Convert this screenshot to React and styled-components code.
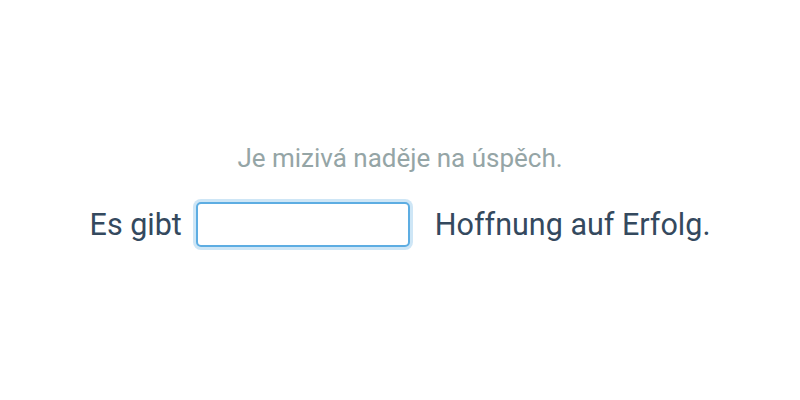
import React from 'react'
import styled, { createGlobalStyle } from "styled-components";

const Global = createGlobalStyle`
body {
  margin: 0;
  background: #fff;
  font-family: Roboto, "Liberation Sans", sans-serif;
}
`;

const Page = styled.div`
height: 400px;
display: flex;
flex-direction: column;
align-items: center;
justify-content: center;
padding-bottom: 10px;
box-sizing: border-box;
`;

const Hint = styled.p`
margin: 0 0 29px;
font-size: 26px;
line-height: 30px;
color: #95a5a6;
`;

const Sentence = styled.div`
display: flex;
align-items: center;
font-size: 30.5px;
color: #34495e;
`;

const Word = styled.span`
margin: ${p => p.side === 'left' ? '0 14px 0 0' : '0 0 0 25px'};
`;

const Blank = styled.input`
width: 214px;
height: 45px;
box-sizing: border-box;
border: 2px solid #5dade2;
border-radius: 5px;
box-shadow: 0 0 0 3px rgba(93, 173, 226, 0.3);
outline: none;
font-size: 24px;
font-family: inherit;
padding: 0 10px;
`;

export default function App() {
    return (
        <>
        <Global />
        <Page>
            <Hint>Je mizivá naděje na úspěch.</Hint>
            <Sentence>
                <Word side="left">Es gibt</Word>
                <Blank type="text" />
                <Word side="right">Hoffnung auf Erfolg.</Word>
            </Sentence>
        </Page>
        </>
    );
}
